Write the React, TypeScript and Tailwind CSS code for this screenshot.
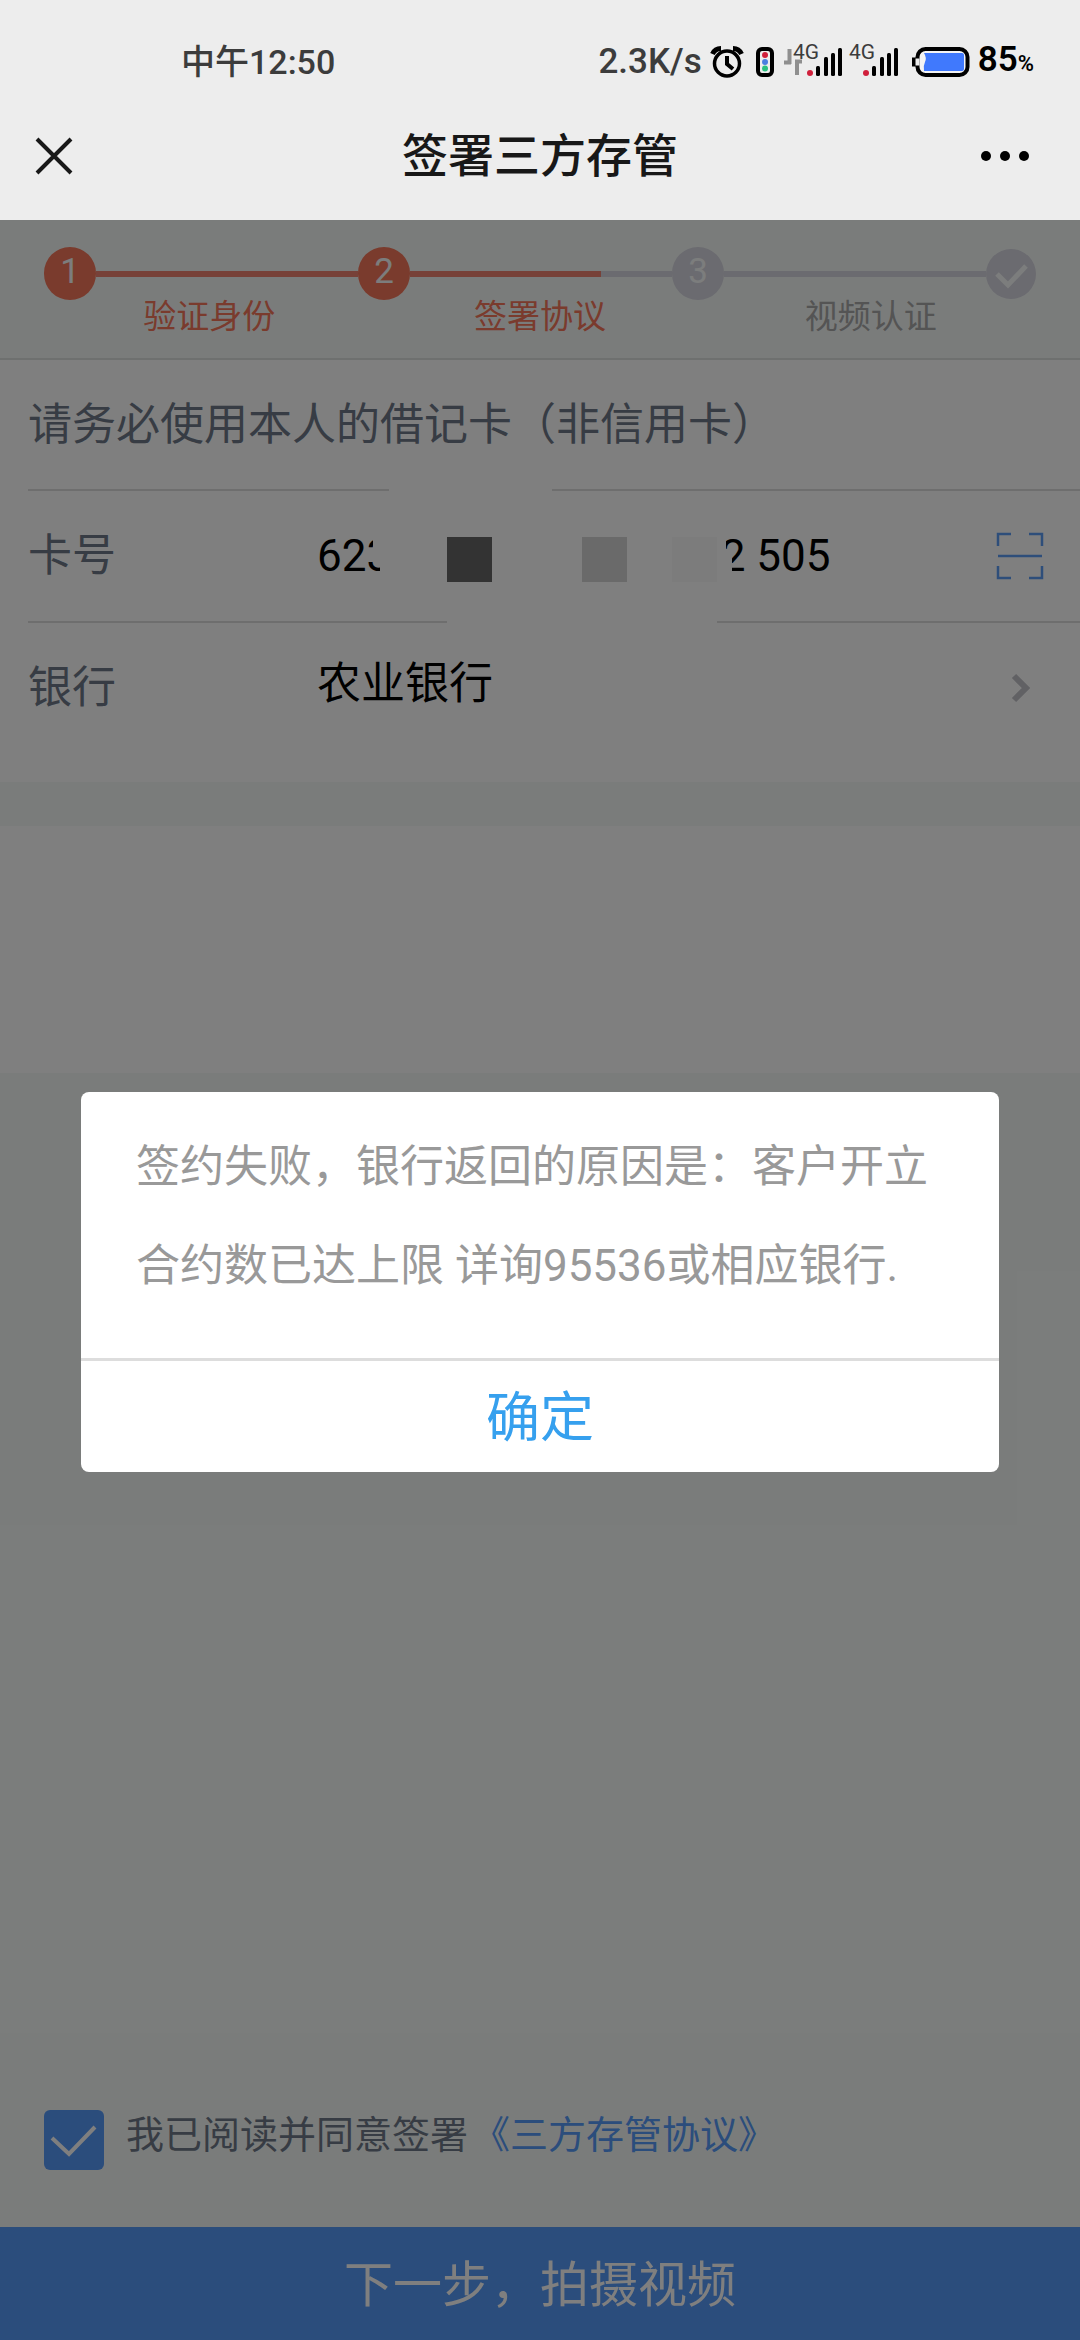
import { useState } from "react";

const steps = ["验证身份", "签署协议", "视频认证"];

// masked digits keep their width with figure spaces
const cardNumber = "623\u2007 \u2007\u2007\u2007\u2007 \u2007\u2007\u2007\u2007 \u2007\u2007\u20072 505";

function SignalBars(){
    return <>
        <circle cx="3" cy="32" r="3" fill="#d0203c" />
        <rect x="9" y="25" width="4" height="10" rx="1.5" />
        <rect x="17" y="16" width="4" height="19" rx="1.5" />
        <rect x="24" y="12" width="4" height="23" rx="1.5" />
        <rect x="31" y="7" width="4" height="28" rx="1.5" />
    </>
}

function StatusBar(){
    return <div className="flex h-[124px] items-center justify-between pl-[181px] pr-[46px] text-[#3c3c3c]">
        <span className="text-[34px] font-medium leading-10">中午12:50</span>
        <div className="flex items-center">
            <span className="text-[35px] font-medium leading-10">2.3K/s</span>
            <svg className="ml-2" width="34" height="34" viewBox="0 0 34 34" fill="none" stroke="#000">
                <circle cx="17" cy="18.5" r="12.5" strokeWidth="3.5" />
                <path d="M17 11v8l6 5" strokeWidth="4" />
                <path d="M2.5 9Q5 3.5 11 3.5M31.5 9Q29 3.5 23 3.500" strokeWidth="5" />
            </svg>
            <svg className="ml-3" width="18" height="32" viewBox="0 0 18 32">
                <rect x="2" y="3" width="14" height="26" rx="4" fill="#eee" stroke="#000" strokeWidth="4" />
                <circle cx="9" cy="9" r="3" fill="#d0203c" />
                <circle cx="9" cy="16" r="3" fill="#4a7ee0" />
                <circle cx="9" cy="22.5" r="3" fill="#2bc080" />
            </svg>
            <svg className="ml-2.5" width="116" height="42" viewBox="0 0 116 42" fontFamily="Roboto, sans-serif" fontSize="21">
                <path d="M5.500 8v15M0 21.500h7M13 34V19M11 20.500h7" stroke="#8f8f8f" strokeWidth="4" />
                <text x="9" y="18" fill="#3c3c3c">4G</text>
                <g transform="translate(23)"><SignalBars /></g>
                <text x="65" y="18" fill="#3c3c3c">4G</text>
                <g transform="translate(79)"><SignalBars /></g>
            </svg>
            <svg className="ml-3" width="58" height="32" viewBox="0 0 58 32">
                <rect x="5.5" y="3" width="50" height="26" rx="8" fill="#f4f4f4" stroke="#000" strokeWidth="4" />
                <path d="M2 11.5v9" stroke="#000" strokeWidth="4" />
                <path d="M5.500 12.500v7" stroke="#ececec" strokeWidth="4" />
                <path d="M12 7h38q2 0 2 2v14q0 2-2 2H12q-1-5 1-9t-1-9" fill="#4079fd" />
            </svg>
            <span className="ml-2 text-[35px] font-semibold leading-10 text-black">85<span className="text-[22px]">%</span></span>
        </div>
    </div>
}

function TitleBar(){
    return <div className="grid h-16 grid-cols-[1fr_auto_1fr] items-center px-[34px] text-[#181818]">
        <button aria-label="关闭" className="justify-self-start">
            <svg width="40" height="40" viewBox="0 0 40 40" stroke="#181818" strokeWidth="4">
                <path d="M3 3l34 34M37 3L3 37" />
            </svg>
        </button>
        <h1 className="text-[46px] font-medium leading-14">签署三方存管</h1>
        <button aria-label="更多" className="justify-self-end pr-4">
            <svg width="50" height="12" viewBox="0 0 50 12" fill="#000">
                <circle cx="6" cy="6" r="5" />
                <circle cx="25" cy="6" r="5" />
                <circle cx="44" cy="6" r="5" />
            </svg>
        </button>
    </div>
}

function StepDot({ n, done }: { n: number; done?: boolean }){
    return <span className={`flex h-[53px] w-[52px] items-center justify-center rounded-full pb-1 text-[35px] leading-10 text-[#f8fbfa] ${done ? "bg-[#f4765a]" : "bg-[#d6d6e0]"}`}>{n}</span>
}

function Steps(){
    return <div className="border-b-2 border-[#dde0df] px-11 pt-[27px] pb-6">
        <div className="flex items-center">
            <StepDot n={1} done />
            <span className="h-1.5 flex-1 bg-[#ee8270]" />
            <StepDot n={2} done />
            <span className="flex h-1.5 flex-1">
                <span className="w-[73%] bg-[#ee8270]" />
                <span className="flex-1 bg-[#d6d6e0]" />
            </span>
            <StepDot n={3} />
            <span className="h-1.5 flex-1 bg-[#d6d6e0]" />
            <svg width="50" height="50" viewBox="0 0 50 50" fill="none">
                <circle cx="25" cy="25" r="25" fill="#d6d6e0" />
                <path d="M11 25l11 11 18-19" stroke="#f8fbfa" strokeWidth="5" />
            </svg>
        </div>
        <div className="grid grid-cols-3 text-center text-[33px] leading-[34px]">
            {steps.map((s, i) => <span key={s} className={i < 2 ? "text-[#f4765a]" : "text-[#a8a8a8]"}>{s}</span>)}
        </div>
    </div>
}

// covers the middle of the card number and parts of the row borders
function Mosaic(){
    return <svg className="pointer-events-none absolute -top-1 left-[345px]" width="372" height="142" viewBox="0 0 372 142">
        <path fill="#fff" d="M16 0h163v6H16zM74 130h270v12H74zM0 45h353v21h6v10h13v4h-13v20H7V76H0z" />
        <rect x="74" y="50" width="45" height="45" fill="#666" />
        <rect x="209" y="50" width="45" height="45" fill="#d4d4d4" />
        <rect x="299" y="50" width="45" height="45" fill="#f9f9f9" />
    </svg>
}

function CardForm(){
    return <form className="bg-white pl-7 text-[44px] text-[#6e7889]">
        <p className="flex h-[131px] items-center border-b-2 border-[#dcdcdc]">请务必使用本人的借记卡（非信用卡）</p>
        <div className="relative flex h-[132px] items-center border-b-2 border-[#dcdcdc] pr-9">
            <label htmlFor="card" className="w-[289px]">卡号</label>
            <input id="card" readOnly value={cardNumber} className="min-w-0 flex-1 text-black outline-none" />
            <button type="button" aria-label="扫描银行卡">
                <svg width="48" height="48" viewBox="0 0 48 48" fill="none" stroke="#5c9cf4" strokeWidth="2.5">
                    <path d="M2 14V2h13M33 2h13v12M46 34v12H33M15 46H2V34M2 24h44" />
                </svg>
            </button>
            <Mosaic />
        </div>
        <div className="flex h-[159px] items-start pt-7 pr-12">
            <span className="w-[289px] pt-1">银行</span>
            <button type="button" className="flex flex-1 items-center justify-between text-black">
                农业银行
                <svg className="mt-2" width="22" height="30" viewBox="0 0 22 30" fill="none" stroke="#c2c2c8" strokeWidth="6">
                    <path d="M4 3l12 12L4 27" />
                </svg>
            </button>
        </div>
    </form>
}

export default function App(){
    const [open, setOpen] = useState(true);
    const [agreed, setAgreed] = useState(true);

    return <div className="flex min-h-screen flex-col bg-[#f5f9f7] font-['Roboto','Noto_Sans_CJK_SC',sans-serif]">
        <header className="bg-[#ededed] pb-8">
            <StatusBar />
            <TitleBar />
        </header>
        <main className="relative flex flex-1 flex-col">
            <Steps />
            <CardForm />
            <div className="mt-11 h-[247px] bg-white" />
            <div className="mt-auto flex items-center gap-[22px] px-11 pb-[55px] text-[38px]">
                <span className="relative flex">
                    <input id="agree" type="checkbox" checked={agreed} onChange={e => setAgreed(e.target.checked)} className="peer size-[60px] appearance-none rounded-md bg-[#569af8]" />
                    <svg className="pointer-events-none absolute inset-0 hidden peer-checked:block" width="60" height="60" viewBox="0 0 60 60" fill="none" stroke="#fff" strokeWidth="4">
                        <path d="M8 28l17 16 26-27" />
                    </svg>
                </span>
                <p className="flex gap-1 pb-2 text-[#6e7889]">
                    <label htmlFor="agree">我已阅读并同意签署</label>
                    <a href="#agreement" className="text-[#569af8]">《三方存管协议》</a>
                </p>
            </div>
            <button className="h-[113px] bg-[#569af8] pt-1 text-[49px] text-white">下一步，拍摄视频</button>
            {open && <div className="absolute inset-0 flex items-center justify-center bg-black/50 pt-1">
                <div role="alertdialog" className="w-[85%] overflow-hidden rounded-lg bg-white">
                    <p className="px-[55px] pt-[26px] pb-[42px] text-[44px] leading-[99px] text-[#999]">签约失败，银行返回的原因是：客户开立合约数已达上限 详询95536或相应银行.</p>
                    <button onClick={() => setOpen(false)} className="h-[114px] w-full border-t-3 border-[#ddd] pt-1 text-[54px] text-[#36a0ee]">确定</button>
                </div>
            </div>}
        </main>
    </div>
}
